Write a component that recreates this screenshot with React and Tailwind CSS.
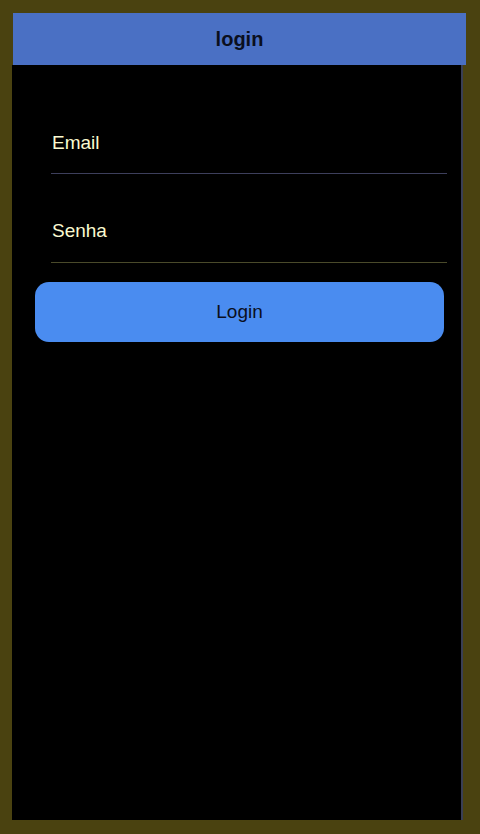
export default function App() {
  return (
    <div className="w-[480px] h-[834px] bg-[#4a4210] pt-[13px] pl-[12px] pr-[14px] pb-[14px] flex flex-col" style={{ fontFamily: '"Liberation Sans", Arial, sans-serif' }}>
      <div className="h-[52px] ml-[1px] bg-[#4a70c4] flex items-center justify-center">
        <span className="text-[20px] font-bold text-[#0a0f1e]">login</span>
      </div>
      <div className="flex-1 w-[451px] bg-black border-r-2 border-[#3a3f55] flex flex-col">
        <div className="pt-[68px] pl-[39px] pr-[14px]">
          <div className="text-[19px] text-[#fafad0] leading-none pl-[1px]">Email</div>
          <div className="h-px bg-[#3d3f5c] mt-[21px]" />
          <div className="text-[19px] text-[#fafad0] leading-none pl-[1px] mt-[47px]">Senha</div>
          <div className="h-px bg-[#4a4a2a] mt-[22px]" />
        </div>
        <div className="mt-[19px] ml-[23px] w-[409px] h-[60px] rounded-[14px] bg-[#4a8cf0] flex items-center justify-center">
          <span className="text-[19px] text-[#0a0f1e]">Login</span>
        </div>
      </div>
    </div>
  );
}
